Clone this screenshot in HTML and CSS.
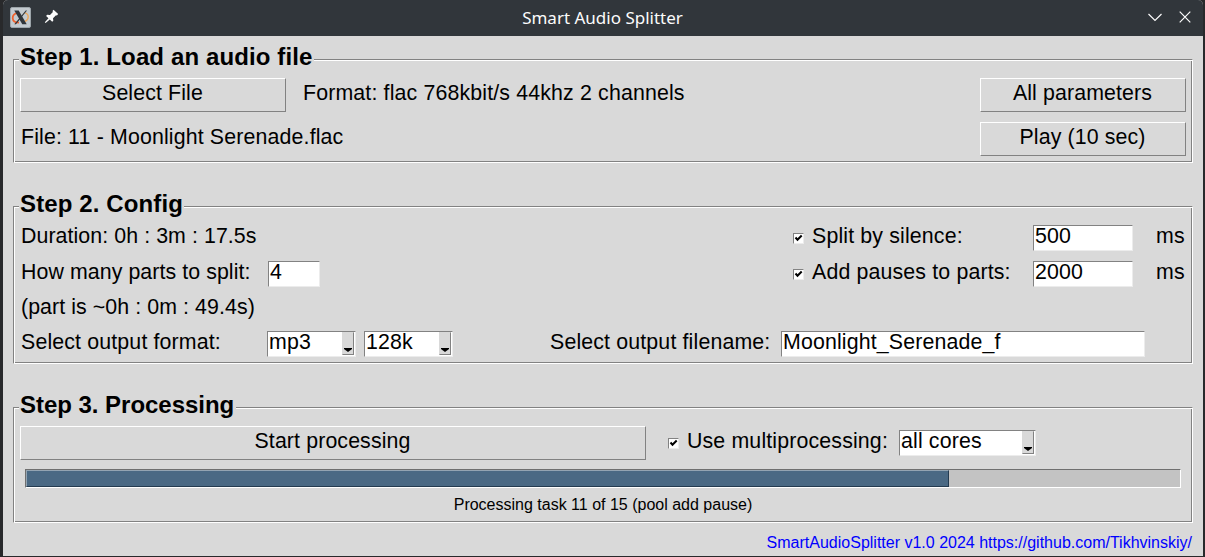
FILE: index.html
```
<!DOCTYPE html>
<html lang="en">
<head>
<meta charset="utf-8">
<title>Smart Audio Splitter</title>
<link rel="stylesheet" href="styles.css">
</head>
<body>
<div class="window">
  <header class="titlebar">
    <svg class="app-icon" width="21" height="21" viewBox="0 0 21 21">
      <rect x=".5" y=".5" width="20" height="20" rx="1.5" fill="#c3cacf" stroke="#9da5aa"/>
      <path d="M8 5.8C4.500 6.400 2.500 8.500 2.700 11.300C2.900 14 5.300 15.700 9 15.700" fill="none" stroke="#f0622d" stroke-width="1.800"/>
      <path d="M12 15.600C16.500 14.500 18.300 12.500 18.200 9.800C18.100 7.500 16.600 6.200 14.500 5.900" fill="none" stroke="#eda65a" stroke-width="1.400"/>
      <path d="M4.300 3.500h4.400l8 13.700h-4.400z" fill="#30353a"/>
      <path d="M15.700 3.500h1.300L6 17.200H4.300z" fill="#30353a"/>
    </svg>
    <svg class="pin" width="15" height="15" viewBox="0 0 15 15">
      <path d="M9.500 .8L14.200 5.100L12.900 6.500L12 6.200L9 9.200L9.300 11.800L8.200 12.800L5.800 10.500L1.600 14L.8 13.300L4.500 9.200L2.100 6.900L3.100 5.800L6 6L8.900 3L8.500 2z" fill="#fcfcfc"/>
    </svg>
    <h1 class="title">Smart Audio Splitter</h1>
    <svg class="shade" width="14" height="14" viewBox="0 0 14 14"><path d="M.5 4L7 10.500L13.500 4" fill="none" stroke="#fcfcfc" stroke-width="1.200"/></svg>
    <svg class="close" width="12" height="12" viewBox="0 0 12 12"><path d="M.7.7L11.300 11.300M11.300.7L.7 11.300" fill="none" stroke="#fcfcfc" stroke-width="1.200"/></svg>
  </header>

  <main class="content">
    <section class="group group-load">
      <h2 class="legend">Step 1. Load an audio file</h2>
      <div class="row row-tall">
        <button class="button select-file">Select File</button>
        <span class="label format-info">Format: flac 768kbit/s 44khz 2 channels</span>
        <button class="button side">All parameters</button>
      </div>
      <div class="row row-tall row-file">
        <span class="label">File: 11 - Moonlight Serenade.flac</span>
        <button class="button side">Play (10 sec)</button>
      </div>
    </section>

    <section class="group group-config">
      <h2 class="legend">Step 2. Config</h2>
      <div class="config-rows">
        <div class="row">
          <span class="label tight">Duration: 0h : 3m : 17.5s</span>
          <label class="check"><svg class="box" width="11" height="11" viewBox="1 1 9 9"><path d="M2.500 4.500L4.500 6.700L8.700 2.500" /></svg><span class="label">Split by silence:</span></label>
          <div class="entry number">500</div>
          <span class="label unit">ms</span>
        </div>
        <div class="row">
          <span class="label tight parts-label">How many parts to split:</span>
          <div class="entry parts">4</div>
          <label class="check"><svg class="box" width="11" height="11" viewBox="1 1 9 9"><path d="M2.500 4.500L4.500 6.700L8.700 2.500" /></svg><span class="label">Add pauses to parts:</span></label>
          <div class="entry number">2000</div>
          <span class="label unit">ms</span>
        </div>
        <div class="row"><span class="label tight">(part is ~0h : 0m : 49.4s)</span></div>
        <div class="row">
          <span class="label output-label">Select output format:</span>
          <div class="entry combo">mp3<span class="drop"></span></div>
          <div class="entry combo bitrate">128k<span class="drop"></span></div>
          <span class="label filename-label">Select output filename:</span>
          <div class="entry filename">Moonlight_Serenade_f</div>
        </div>
      </div>
    </section>

    <section class="group group-process">
      <h2 class="legend legend-process">Step 3. Processing</h2>
      <div class="row row-tall">
        <button class="button start">Start processing</button>
        <label class="check multi"><svg class="box" width="11" height="11" viewBox="1 1 9 9"><path d="M2.500 4.500L4.500 6.700L8.700 2.500" /></svg><span class="label">Use multiprocessing:</span></label>
        <div class="entry combo cores">all cores<span class="drop"></span></div>
      </div>
      <div class="progress"><div class="bar" style="width: 923px"></div></div>
      <p class="status">Processing task 11 of 15 (pool add pause)</p>
    </section>

    <footer class="footer">SmartAudioSplitter v1.0 2024 https://github.com/Tikhvinskiy/</footer>
  </main>
</div>
</body>
</html>
```
FILE: styles.css
```
* { box-sizing: border-box; }

body {
  margin: 0;
  height: 557px;
  overflow: hidden;
  background: #28292b;
  font-family: "Liberation Sans", Arial, sans-serif;
  font-size: 21.33px;
  letter-spacing: 0.15px;
  color: #000;
  white-space: nowrap;
}

h1, h2, p { margin: 0; }
svg { display: block; flex: none; }

.window { width: 1200px; height: 556px; margin-left: 3px; background: #d9d9d9; border-radius: 5px 5px 0 0; overflow: hidden; }

.titlebar {
  display: grid;
  grid-template-columns: 34px 34px 1fr 40px 30px;
  align-items: center;
  height: 36px;
  background: #31363b;
}
.app-icon { margin: -2px 0 0 7px; }
.pin { margin: -3px 0 0 7px; }
.title {
  padding-left: 1px;
  font: 400 17px/36px "Noto Sans", sans-serif;
  letter-spacing: 0;
  color: #fcfcfc;
  text-align: center;
}
.shade { margin: -2px 0 0 15px; }
.close { margin: -2px 0 0 6px; }

.content { padding: 23px 10px 0; }

.group {
  width: 1180px;
  padding: 0 6px;
  border: 1px solid;
  border-color: #828282 #fff #fff #828282;
  box-shadow: inset 1px 1px #fff, inset -1px -1px #828282;
}
.group-load { height: 104px; }
.group-config { height: 158px; margin-top: 43px; }
.group-process { height: 116px; margin-top: 43px; }

.legend {
  width: max-content;
  height: 27px;
  margin: -17px 0 8px -1px;
  padding: 0 1px;
  background: #d9d9d9;
  font-size: 24px;
  line-height: 27px;
  letter-spacing: 0.12px;
}
.legend-process { padding-right: 2px; letter-spacing: -0.03px; }

.row { display: flex; align-items: flex-start; height: 26px; }
.row-tall { height: 34px; }
.row-file { margin-top: 10px; }
.label { line-height: 22px; margin-left: 1px; }
.tight { letter-spacing: 0.08px; }
.row-tall > .label { line-height: 30px; }

.button {
  flex: none;
  height: 34px;
  padding: 0 1px 4px 0;
  border: 1px solid;
  border-color: #fff #828282 #828282 #fff;
  border-radius: 0;
  background: #d9d9d9;
  color: #000;
  font: inherit;
  letter-spacing: 0.12px;
  line-height: 28px;
}
.select-file { width: 266px; }
.format-info { margin-left: 17px; }
.side { width: 206px; margin-left: auto; }
.start { width: 626px; }

.config-rows { display: grid; grid-template-rows: 36px 35px 35px 26px; }

.entry {
  flex: none;
  height: 26px;
  padding-left: 1px;
  border: 1px solid;
  border-color: #828282 #ececec #ececec #828282;
  background: #fff;
  line-height: 20px;
}
.check { display: flex; align-items: flex-start; width: 240px; margin-left: auto; }
.check .label { margin-left: 8px; }
.box {
  margin-top: 8px;
  border: 1px solid;
  border-color: #828282 #ececec #ececec #828282;
  background: #fff;
}
.box path { fill: none; stroke: #000; stroke-width: 2; }
.number { width: 100px; }
.unit { width: 30px; margin-left: 23px; }
.parts-label { width: 247px; margin-left: 1px; }
.parts { width: 52px; }
.output-label { width: 246px; }

.combo { display: flex; justify-content: space-between; width: 89px; }
.drop {
  width: 12px;
  height: 24px;
  border: 1px solid;
  border-color: #d9d9d9 #828282 #828282 #d9d9d9;
  background: #d9d9d9;
}
.drop::before {
  content: "";
  display: block;
  width: 8px;
  height: 4px;
  margin: 16px 0 0 1px;
  background: #000;
  clip-path: polygon(0 0, 100% 0, 100% 25%, 50% 100%, 0 25%);
}
.bitrate { margin-left: 8px; }
.filename-label { width: 231px; margin-left: 97px; }
.filename { width: 364px; }

.multi { width: 231px; margin: 4px 0 0 22px; }
.cores { width: 137px; margin-top: 4px; }

.progress {
  width: 1156px;
  height: 19px;
  margin: 9px 0 0 5px;
  border: 1px solid;
  border-color: #6f6f6f #fff #fff #6f6f6f;
  background: #c3c3c3;
}
.bar {
  height: 17px;
  border: 1px solid;
  border-color: #93a4b2 #243b50 #243b50 #93a4b2;
  background: #4a6984;
}
.status { margin-top: 8px; font-size: 16px; line-height: 18px; letter-spacing: 0; text-align: center; }
.drop { height: 23px; margin-right: 1px; }
.drop::before { margin: 15px 0 0 1px; }
.footer { margin: 11px 1px 0 0; font-size: 16px; line-height: 18px; letter-spacing: 0; text-align: right; color: #00f; }
```
